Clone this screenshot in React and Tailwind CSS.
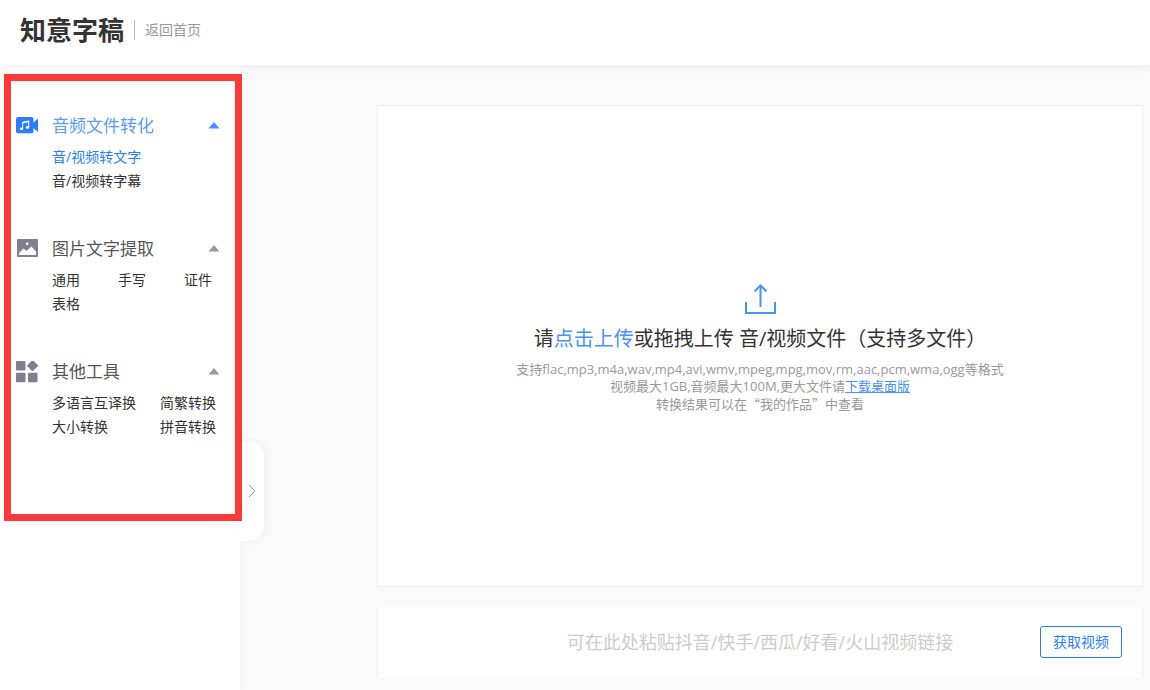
import clsx from 'clsx';

const sections = [
  {
    title: '音频文件转化',
    icon: VideoMusicIcon,
    active: true,
    columns: 'grid-cols-1',
    items: ['音/视频转文字', '音/视频转字幕'],
  },
  {
    title: '图片文字提取',
    icon: PictureIcon,
    columns: 'grid-cols-[66px_66px_1fr]',
    items: ['通用', '手写', '证件', '表格'],
  },
  {
    title: '其他工具',
    icon: ToolsIcon,
    columns: 'grid-cols-[108px_1fr]',
    items: ['多语言互译换', '简繁转换', '大小转换', '拼音转换'],
  },
];

function VideoMusicIcon() {
  return (
    <svg width="22" height="22" viewBox="0 0 22 22" aria-hidden="true">
      <rect x="0" y="2" width="17.5" height="16.2" rx="2" fill="#2a7efb" />
      <path d="M16.500 8.200 22 3.500v13.500l-5.500-4.800z" fill="#2a7efb" />
      <path d="M6.700 13.600V7.500l6-1.400v6" fill="none" stroke="#fff" />
      <path d="M6.200 6.900l7-1.500v1.700l-7 1.500z" fill="#fff" />
      <ellipse cx="5.500" cy="13.700" rx="1.700" ry="1.300" fill="#fff" />
      <ellipse cx="11.500" cy="12.400" rx="1.700" ry="1.300" fill="#fff" />
    </svg>
  );
}

function PictureIcon() {
  return (
    <svg width="22" height="22" viewBox="0 0 22 22" aria-hidden="true">
      <rect x="1" y="1" width="21" height="18" rx="1" fill="#7f808f" />
      <path d="M3 17v-2l4.500-4.500 3 2.500 5-4.500 4.500 5V17z" fill="#fff" />
      <path d="M11.200 4l1.500 1.700-1.500 1.700-1.500-1.700z" fill="#fff" />
    </svg>
  );
}

function ToolsIcon() {
  return (
    <svg width="22" height="22" viewBox="0 0 22 22" fill="#7f808f" aria-hidden="true">
      <rect x="0" y="0" width="9.500" height="9.500" rx="1" />
      <rect x="0" y="11.800" width="9.500" height="9.500" rx="1" />
      <rect x="12" y="11.800" width="9.500" height="9.500" rx="1" />
      <path d="M15.900-.5a1 1 0 0 1 1.300 0l4.500 4.500a1 1 0 0 1 0 1.200l-4.500 4.500a1 1 0 0 1-1.300 0l-4.500-4.500a1 1 0 0 1 0-1.200z" />
    </svg>
  );
}

function UploadIcon() {
  return (
    <svg width="32" height="32" viewBox="0 0 32 32" fill="none" stroke="#4a90ff" strokeWidth="2" aria-hidden="true">
      <path d="M2 19v11h29V19" />
      <path d="M16.500 24V2.500" />
      <path d="M10.500 8.500l6-6 6 6" />
    </svg>
  );
}

function MenuSection({ title, icon: Icon, active, columns, items }) {
  return (
    <section>
      <button type="button" className="flex h-[38px] w-full items-center pr-5 pl-4">
        <Icon />
        <span className={clsx('ml-[14px] text-[17px]', active ? 'text-[#5c9bfb]' : 'text-[#555]')}>{title}</span>
        <svg className="ml-auto" width="12" height="8" viewBox="0 0 12 8" aria-hidden="true">
          <path d="M6 0 11.500 6.500H.5z" fill={active ? '#4a90ff' : '#999'} />
        </svg>
      </button>
      <ul className={clsx('grid pl-[52px] text-sm leading-6 whitespace-nowrap', columns)}>
        {items.map((item, i) => (
          <li key={item}>
            <a href="#" className={active && i === 0 ? 'text-[#2a7efb]' : 'text-[#333]'}>
              {item}
            </a>
          </li>
        ))}
      </ul>
    </section>
  );
}

function Sidebar() {
  return (
    <aside className="relative w-60 shrink-0 bg-white shadow-[0_0_10px_rgba(0,0,0,0.04)]">
      <nav className="flex flex-col gap-[37px] pt-[42px]">
        {sections.map((section) => (
          <MenuSection key={section.title} {...section} />
        ))}
      </nav>

      {/* Collapse handle */}
      <button
        type="button"
        aria-label="展开"
        className="absolute top-[376px] left-full flex h-[100px] w-6 items-center justify-center rounded-r-2xl bg-white shadow-[4px_0_10px_rgba(0,0,0,0.04)]"
      >
        <svg width="8" height="14" viewBox="0 0 8 14" fill="none" stroke="#999" aria-hidden="true">
          <path d="M1 1l6 6-6 6" />
        </svg>
      </button>

      {/* Highlight frame around the menu */}
      <div className="pointer-events-none absolute top-[9px] -right-[2px] left-1 h-[447px] border-7 border-[#fc3838]" />
    </aside>
  );
}

export default function App() {
  return (
    <div className="flex min-h-screen flex-col bg-[#fafafa] font-['Open_Sans','Noto_Sans_CJK_SC',sans-serif] text-[#333]">
      <header className="relative z-10 flex h-[65px] items-center bg-white pb-[5px] pl-5 shadow-[0_0_12px_rgba(0,0,0,0.08)]">
        <h1 className="text-[26px] leading-8 font-bold">知意字稿</h1>
        <a href="#" className="ml-[10px] border-l border-[#bbb] pl-[10px] text-sm leading-5 text-[#999]">
          返回首页
        </a>
      </header>

      <div className="flex flex-1">
        <Sidebar />

        <main className="flex flex-1 flex-col gap-5 pt-10 pr-[7px] pb-[13px] pl-[137px]">
          <div className="flex min-h-[482px] flex-1 flex-col items-center justify-center border border-[#eee] bg-white pt-[2px]">
            <UploadIcon />
            <p className="mt-2 text-xl leading-8">
              请
              <a href="#" className="text-[#4a90ff]">
                点击上传
              </a>
              或拖拽上传 音/视频文件（支持多文件）
            </p>
            <div className="mt-[6px] text-center text-[13px] leading-[17px] text-[#999]">
              <p>支持flac,mp3,m4a,wav,mp4,avi,wmv,mpeg,mpg,mov,rm,aac,pcm,wma,ogg等格式</p>
              <p>
                视频最大1GB,音频最大100M,更大文件请
                <a href="#" className="text-[#4a90ff] underline">
                  下载桌面版
                </a>
              </p>
              <p lang="zh-CN" className="font-['Noto_Sans_CJK_SC',sans-serif]">
                转换结果可以在“我的作品”中查看
              </p>
            </div>
          </div>

          <form className="flex h-[70px] items-center border-x border-[#eee] bg-white px-5">
            <input
              type="text"
              aria-label="视频链接"
              placeholder="可在此处粘贴抖音/快手/西瓜/好看/火山视频链接"
              className="h-10 min-w-0 flex-1 pl-[82px] text-center text-lg outline-none placeholder:text-[#ccc]"
            />
            <button
              type="button"
              className="h-8 w-[82px] shrink-0 rounded-[3px] border border-[#2a7efb] text-sm text-[#2a7efb]"
            >
              获取视频
            </button>
          </form>
        </main>
      </div>
    </div>
  );
}
